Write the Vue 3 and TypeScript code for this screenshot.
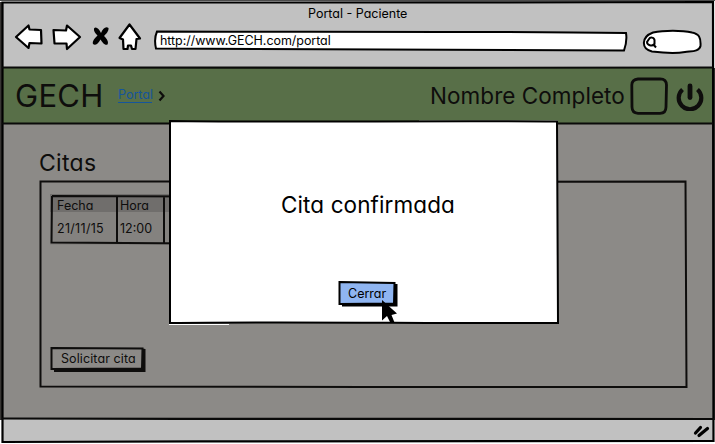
<script setup lang="ts">
import { ref } from 'vue'

interface Appointment {
  date: string
  time: string
}

const appointments = ref<Appointment[]>([{ date: '21/11/15', time: '12:00' }])
const dialogOpen = ref(true)
</script>

<template>
  <div class="window">
    <header class="browser">
      <div class="title"><span>Portal - Paciente</span></div>
      <div class="toolbar">
        <svg class="nav" width="140" height="32" viewBox="0 0 140 32">
          <g fill="#fff" stroke="#000" stroke-width="2.200" stroke-linejoin="round">
            <path d="M2 16 L14.500 4.500 L15.500 8.500 L27 9 L27.500 22.500 L15.500 22 L14.500 27 Z" />
            <path d="M39.500 9 L52 9.500 L53 4.500 L66 16 L53 28 L52.500 22.500 L40.500 22.500 Z" />
            <path d="M115.500 3.500 L126 17.500 L122.500 18 L121.500 28 L118 28 L117 24.500 L114 24.500 L113.500 28 L109.500 28 L109 18.500 L105.500 17 Z" />
          </g>
          <path fill="#000" d="M80 7.500 C82 5 85 8 87 12 C89 7 92 5 94.500 7 C95 10 92 13 90 15 C93 18 95 21 93.500 23.500 C91 25 88 21 86.500 18.500 C84 23 81 25 79 23 C78 20 81 17 83.500 14.500 C81 12 79.500 10 80 7.500 Z" />
        </svg>
        <div class="address">
          <svg class="sketch" viewBox="0 0 474 22" preserveAspectRatio="none">
            <path d="M3 1.500 C150 2 320 1 472 3 C473 9 472 15 470 20.500 C310 20 150 20 2 18.500 C.5 12 1 6 3 1.500 Z" fill="#fff" stroke="#000" stroke-width="2" />
          </svg>
          <span>http://www.GECH.com/portal</span>
        </div>
        <svg class="search" width="60" height="26" viewBox="0 0 60 26">
          <path d="M11 3.500 C22 1 40 1 50 3.500 C57 5 59 8 58.500 17 C57 23 49 22 43 23 C32 25 18 23.500 10 22.500 C-1 20 -1 8 11 3.500 Z" fill="#fff" stroke="#000" stroke-width="2" />
          <path d="M7 10 C8 8 12 8 12.500 11 L12.500 15 C10 18 5 16 5 13 Z M11 15 L14 18.500" fill="none" stroke="#000" stroke-width="2" />
        </svg>
      </div>
    </header>

    <nav class="appbar">
      <span class="brand">GECH</span>
      <a class="crumb">Portal</a>
      <svg class="chevron" width="8" height="12" viewBox="0 0 8 12">
        <path d="M1.500 1.500 L5.500 6 L1.500 10.500" fill="none" stroke="#0e0d0c" stroke-width="2.200" />
      </svg>
      <span class="user">Nombre Completo</span>
      <svg class="avatar" width="38" height="38" viewBox="0 0 38 38">
        <path d="M8 2 L30 1.800 Q36.500 2 36.500 8 L36 30 Q36 36.300 30 36.300 L8 36.300 Q2 36 2 30 L1.800 8 Q2 2.500 8 2 Z" fill="none" stroke="#0e0d0c" stroke-width="2.800" />
      </svg>
      <svg class="power" width="28" height="28" viewBox="0 0 28 28">
        <path d="M6.500 6.500 A11.300 11.300 0 1 0 21.500 6.500" fill="none" stroke="#0e0d0c" stroke-width="4.200" />
        <path d="M14 3 L14 14.500" stroke="#0e0d0c" stroke-width="4.800" stroke-linecap="round" />
      </svg>
    </nav>

    <main class="content">
      <h1>Citas</h1>
      <section class="panel">
        <svg class="sketch" viewBox="0 0 650 209" preserveAspectRatio="none">
          <path d="M1.500 1.500 C200 1.500 430 2 647.500 1.500 L648.500 207 C430 207.500 220 206.500 1.500 206.500 Z" fill="none" stroke="#0e0d0c" stroke-width="2" />
        </svg>
        <div class="table">
          <svg class="sketch" viewBox="0 0 150 51" preserveAspectRatio="none">
            <path d="M2 2 L150 2.500 M2 2 L1.500 48.500 L150 49.500 M67 2 L67 49 M114 2 L114 49" fill="none" stroke="#0e0d0c" stroke-width="2" />
          </svg>
          <div class="row head"><span>Fecha</span><span>Hora</span></div>
          <div v-for="item in appointments" :key="item.date" class="row">
            <span class="date">{{ item.date }}</span><span class="time">{{ item.time }}</span>
          </div>
        </div>
        <button class="btn request">
          <svg class="sketch" viewBox="0 0 96 27" preserveAspectRatio="none">
            <path d="M4 26 L95.500 26 L95.500 3 L92 2.500 L92 22 L4 23 Z" fill="#0e0d0c" />
            <path d="M1.500 2 L92.500 2.500 L92 22.500 L1.500 23 Z" fill="#8c8a87" stroke="#0e0d0c" stroke-width="2" />
          </svg>
          <span>Solicitar cita</span>
        </button>
      </section>
    </main>

    <footer class="status">
      <svg width="18" height="16" viewBox="0 0 18 16">
        <path d="M3.500 11 L8.500 5.500 M7 13.500 L15.500 6.500" stroke="#000" stroke-width="3.200" stroke-linecap="round" />
      </svg>
    </footer>

    <svg class="sketch frame" viewBox="0 0 715 444">
      <path d="M0 .5 H715" stroke="#4b4b4b" />
      <path d="M1 2 L1 420 M714.500 68 V420" stroke="#383634" stroke-width="2" />
      <path d="M2.500 2.500 C220 2 480 3 713 2 L713.500 441 C480 442.500 240 440.500 2.500 442 Z" fill="none" stroke="#000" stroke-width="2.200" />
      <path d="M2 67.500 C200 67 480 68.500 713 67.500 M2 123.500 C220 122.500 500 124.500 713 123.500 M2 418.500 C240 419.500 480 418.500 714 419" fill="none" stroke="#0a0a09" stroke-width="2.200" />
    </svg>

    <div v-if="dialogOpen" class="dialog" role="dialog">
      <svg class="sketch" viewBox="0 0 390 205" preserveAspectRatio="none">
        <path d="M0 204.500 H60 M250 0 H389" stroke="#fff" />
        <path d="M1 1 C120 2.500 260 .5 388 1.500 L389 203 C260 203.500 120 201.500 1 203 Z" fill="#fff" stroke="#000" stroke-width="2" />
      </svg>
      <p>Cita confirmada</p>
      <button class="btn close" @click="dialogOpen = false">
        <svg class="sketch" viewBox="0 0 60 27" preserveAspectRatio="none">
          <path d="M4 25.500 L59.500 25.500 L59.500 3 L56 3 L56 22 L4 23 Z" fill="#000" />
          <path d="M1.500 1 L56.500 2 L56 22.500 L1.500 23 Z" fill="#8fb5f1" stroke="#000" stroke-width="2" />
        </svg>
        <span>Cerrar</span>
      </button>
      <svg class="cursor" width="17" height="24" viewBox="0 0 17 24">
        <path d="M1 0 L16 13.500 L10.500 15 L13.500 22.500 L9.500 23 L6 16 L1 20.500 Z" fill="#000" />
      </svg>
    </div>
  </div>
</template>

<style>
body {
  margin: 0;
  background: #fff;
}
</style>

<style scoped>
.window {
  position: relative;
  box-sizing: border-box;
  width: 715px;
  height: 444px;
  padding: 2px 2px 3px 3px;
  overflow: hidden;
  display: flex;
  flex-direction: column;
  font-family: Inter, "Noto Sans", sans-serif;
  font-feature-settings: "cv11";
  font-size: 12.5px;
  line-height: 16px;
  color: #0e0d0c;
}
.sketch {
  position: absolute;
  inset: 0;
  width: 100%;
  height: 100%;
  pointer-events: none;
}
.browser {
  height: 65px;
  background: #c1c1c1;
  color: #000;
}
.title {
  padding: 4px 0 0 305px;
}
.toolbar {
  display: flex;
  align-items: flex-start;
  padding: 0 0 0 12px;
}
.nav {
  margin: -1px -1px 0 -1px;
}
.address {
  position: relative;
  width: 474px;
  height: 22px;
  margin: 8px 0 0 1px;
}
.address span {
  position: relative;
  display: block;
  padding: 3px 0 0 6px;
  letter-spacing: -0.05px;
}
.search {
  margin: 7px 0 0 14px;
}
.appbar {
  height: 56px;
  display: flex;
  align-items: center;
  background: #586f48;
}
.brand {
  width: 101px;
  padding: 2px 0 0 12px;
  box-sizing: border-box;
  font-size: 31px;
  line-height: 40px;
  letter-spacing: 0.3px;
}
.crumb {
  width: 34px;
  margin: 1px 0 0 14px;
  color: #15559b;
  border-bottom: 1px solid #15559b;
  line-height: 14px;
}
.chevron {
  margin: 1px 0 0 6px;
}
.user {
  margin: 2px 0 0 264px;
  width: 200px;
  font-size: 22.500px;
  line-height: 28px;
  letter-spacing: 0.05px;
  white-space: nowrap;
}
.avatar {
  flex: none;
  margin-top: 1px;
}
.power {
  flex: none;
  margin: 3px 0 0 8px;
}
.content {
  flex: 1;
  padding: 25px 25px 0 36px;
  background: #8c8a87;
}
h1 {
  margin: 0;
  height: 32px;
  font-size: 23px;
  font-weight: 400;
  line-height: 31px;
  letter-spacing: 0.3px;
}
.panel {
  position: relative;
  box-sizing: border-box;
  height: 209px;
  padding: 14px 0 0 11px;
}
.table {
  position: relative;
  width: 150px;
  height: 51px;
  background: #84827f;
}
.row {
  display: grid;
  grid-template-columns: 63px 1fr;
  padding: 9px 0 0 7px;
}
.date {
  letter-spacing: 0.3px;
}
.row.head {
  height: 18px;
  padding-top: 0;
  line-height: 23px;
  background: #706e6c;
}
.btn {
  position: relative;
  display: block;
  border: 0;
  padding: 0;
  background: none;
  font: inherit;
  font-feature-settings: inherit;
  color: inherit;
  text-align: left;
}
.btn span {
  position: relative;
  display: block;
  padding: 5px 0 0 10px;
  height: 22px;
}
.request {
  width: 96px;
  margin-top: 101px;
}
.request span {
  padding-left: 11px;
  letter-spacing: 0.1px;
}
.status {
  height: 22px;
  display: flex;
  justify-content: flex-end;
  align-items: center;
  padding-right: 3px;
  background: #c1c1c1;
}
.dialog {
  position: absolute;
  left: 169px;
  top: 120px;
  width: 390px;
  height: 205px;
  color: #000;
}
.dialog p {
  position: relative;
  margin: 0;
  padding: 71px 0 0 112px;
  font-size: 22.500px;
  line-height: 28px;
  letter-spacing: 0.1px;
}
.close {
  width: 60px;
  margin: 62px 0 0 169px;
}
.cursor {
  position: absolute;
  left: 212px;
  top: 180px;
}
</style>
